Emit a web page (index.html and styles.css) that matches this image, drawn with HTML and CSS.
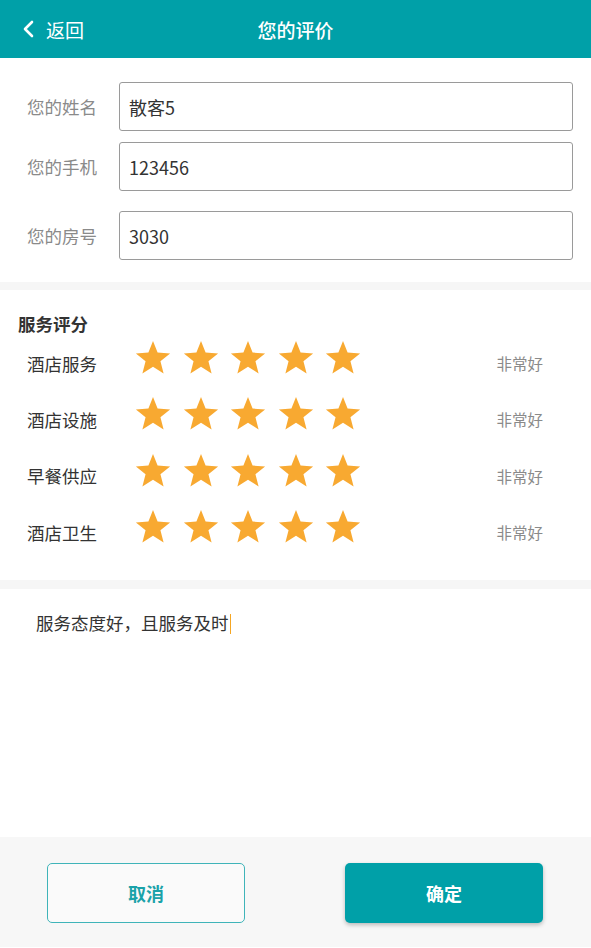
FILE: index.html
```html
<!DOCTYPE html>
<html lang="zh-CN">
<head>
    <meta charset="UTF-8">
    <meta name="viewport" content="width=device-width, initial-scale=1.0">
    <title>您的评价</title>
    <link rel="stylesheet" href="styles.css">
</head>
<body>

    <div class="topbar">
        <div class="back">
            <svg width="12" height="18" viewBox="0 0 12 18"><path d="M10 2 L3 9 L10 16" fill="none" stroke="#fff" stroke-width="2.6" stroke-linecap="round" stroke-linejoin="round"/></svg>
            <span>返回</span>
        </div>
        <h1>您的评价</h1>
        <div></div>
    </div>

    <div class="guest-info">
        <div class="field">
            <label>您的姓名</label>
            <div class="input">散客5</div>
        </div>
        <div class="field second">
            <label>您的手机</label>
            <div class="input">123456</div>
        </div>
        <div class="field third">
            <label>您的房号</label>
            <div class="input">3030</div>
        </div>
    </div>

    <div class="rating">
        <h2>服务评分</h2>
        <div class="rate-list" id="rate-list"></div>
    </div>

    <div class="comment">
        <p>服务态度好，且服务及时<span class="caret"></span></p>
    </div>

    <div class="actions">
        <button class="btn cancel">取消</button>
        <button class="btn confirm">确定</button>
    </div>

    <script>
        // itens da avaliacao
        const items = ['酒店服务', '酒店设施', '早餐供应', '酒店卫生'];
        const star = '<svg class="star" viewBox="0 0 24 24"><path d="M12 1.2 L14.9 8.6 L22.8 9.1 L16.7 14.1 L18.7 21.8 L12 17.5 L5.3 21.8 L7.3 14.1 L1.2 9.1 L9.1 8.6 Z" fill="#f8a931"/></svg>';
        const list = document.getElementById('rate-list');

        items.forEach(name => {
            const row = document.createElement('div');
            row.classList.add('rate-row');
            row.innerHTML = '<span class="rate-name">' + name + '</span>'
                + '<div class="stars">' + star.repeat(5) + '</div>'
                + '<span class="rate-text">非常好</span>';
            list.appendChild(row);
        });
    </script>

</body>
</html>
```

FILE: styles.css
```css
* {
    box-sizing: border-box;
    margin: 0;
    padding: 0;
}
body {
    font-family: "Noto Sans CJK SC", "Noto Sans", sans-serif;
    background-color: #fff;
    color: #333;
}
.topbar {
    height: 58px;
    background-color: #00a0a8;
    display: grid;
    grid-template-columns: 1fr auto 1fr;
    align-items: center;
    color: #fff;
}
.back {
    display: flex;
    align-items: center;
    gap: 12px;
    padding-left: 22px;
    font-size: 19px;
}
.back svg {
    display: block;
}
.topbar h1 {
    font-size: 19px;
    font-weight: 500;
}
.guest-info {
    padding: 24px 18px 22px 27px;
}
.field {
    display: flex;
    align-items: center;
}
.field.second {
    margin-top: 11px;
}
.field.third {
    margin-top: 20px;
}
.field label {
    width: 92px;
    font-size: 17.5px;
    color: #8a8a8a;
}
.input {
    flex: 1;
    height: 49px;
    border: 1.5px solid #9a9a9a;
    border-radius: 3px;
    padding-left: 9px;
    display: flex;
    align-items: center;
    font-size: 18px;
    color: #333;
}
.rating {
    border-top: 8px solid #f6f6f6;
    border-bottom: 9px solid #f6f6f6;
    padding: 23px 48px 33px 0;
}
.rating h2 {
    font-size: 17.5px;
    font-weight: bold;
    line-height: 22px;
    padding-left: 18px;
    color: #333;
}
.rate-list {
    margin-top: 3px;
    display: flex;
    flex-direction: column;
    gap: 16.4px;
}
.rate-row {
    height: 40px;
    display: flex;
    align-items: center;
    padding-left: 27px;
}
.rate-name {
    width: 107px;
    font-size: 17.5px;
    color: #333;
    padding-top: 10px;
}
.stars {
    display: flex;
    gap: 9.5px;
    flex: 1;
}
.star {
    width: 38px;
    height: 38px;
    display: block;
}
.rate-text {
    font-size: 15.5px;
    color: #8a8a8a;
    padding-top: 10px;
}
.comment {
    height: 248px;
    padding: 21px 0 0 36px;
}
.comment p {
    font-size: 17.5px;
    line-height: 26px;
    color: #333;
}
.caret {
    display: inline-block;
    width: 1.5px;
    height: 20px;
    background-color: #f5a623;
    vertical-align: -4px;
    margin-left: 1px;
}
.actions {
    height: 110px;
    background-color: #f7f7f7;
    display: flex;
    justify-content: space-between;
    padding: 26px 48px 0 47px;
}
.btn {
    width: 198px;
    height: 60px;
    border-radius: 5px;
    font-family: "Noto Sans CJK SC", sans-serif;
    font-size: 18px;
    font-weight: bold;
    cursor: pointer;
}
.cancel {
    background-color: #fafafa;
    border: 1.5px solid #3fb4b9;
    color: #1aa2a9;
}
.confirm {
    background-color: #00a0a8;
    border: none;
    color: #fff;
    box-shadow: 0 2px 4px rgba(0, 0, 0, 0.25);
}
```
